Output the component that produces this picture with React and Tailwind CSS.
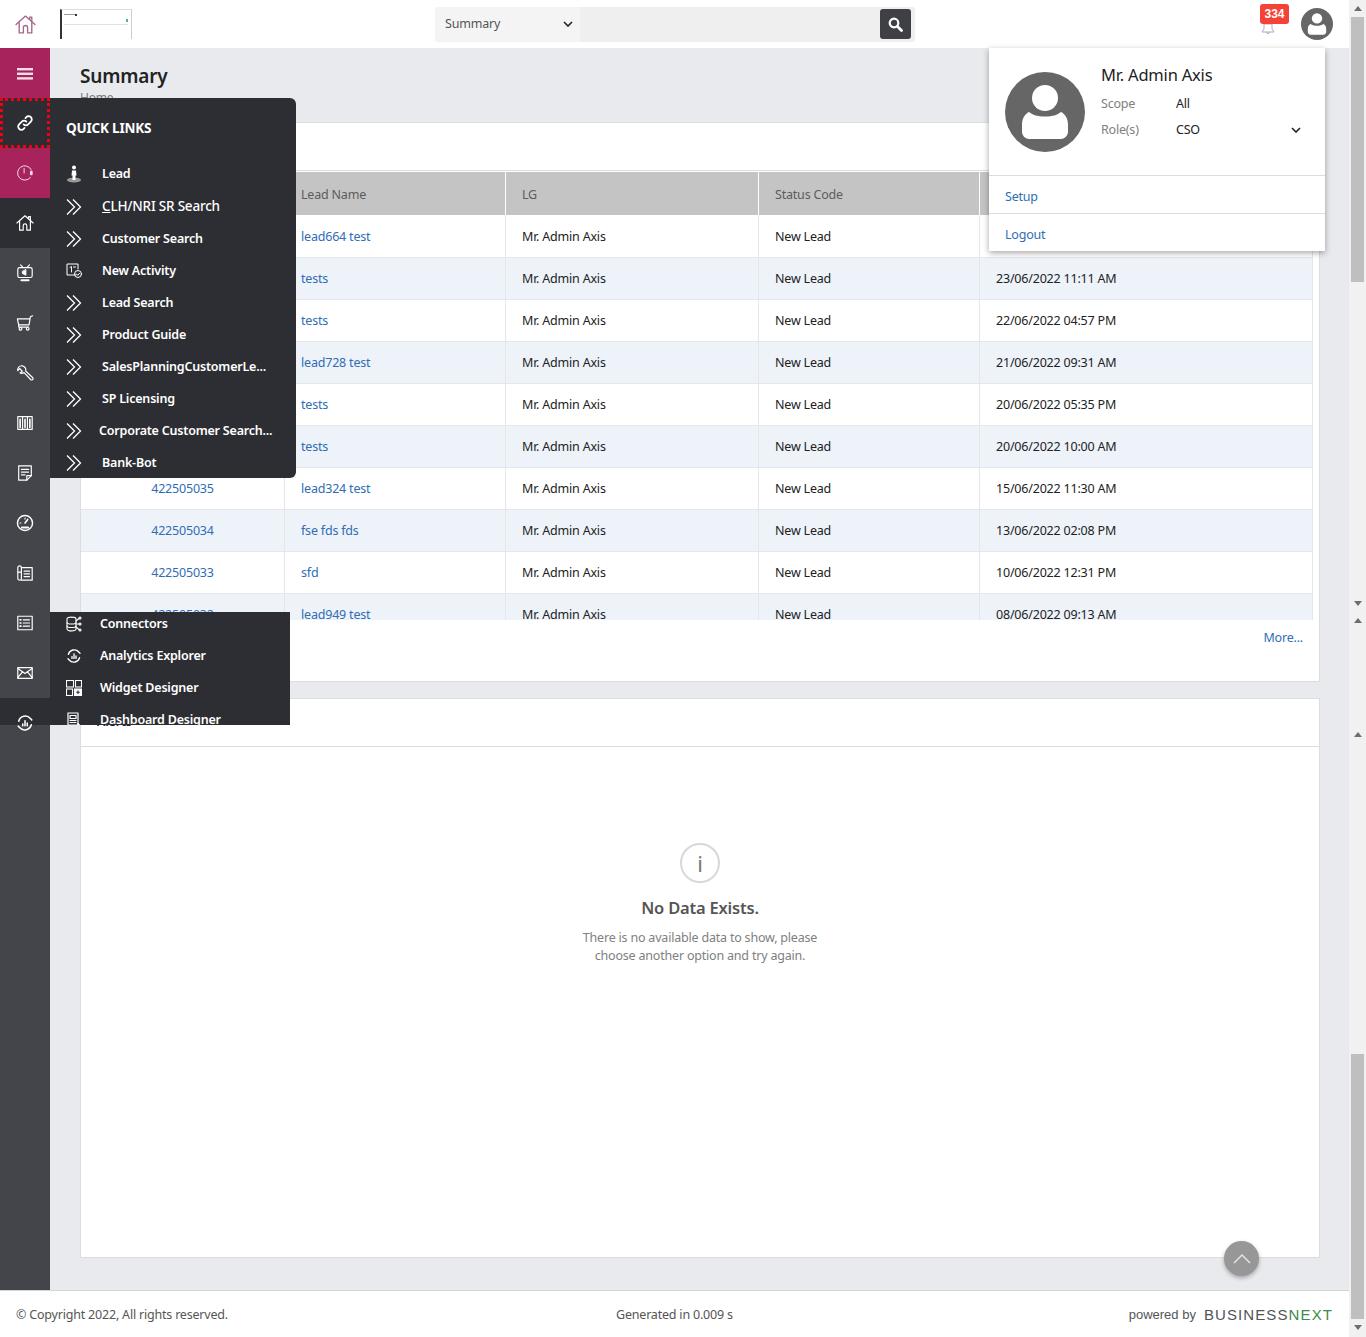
import React from 'react'

const Svg = ({ size = 18, box = 20, children, className = 'text-white' }) => (
  <svg width={size} height={size} viewBox={`0 0 ${box} ${box}`} fill="none" stroke="currentColor" strokeWidth="1.3" strokeLinecap="round" strokeLinejoin="round" className={className}>
    {children}
  </svg>
)

const HomeIcon = ({ size = 18, className }) => (
  <Svg size={size} className={className}>
    <path d="M1 10 10 2l9 8" />
    <path d="M4 8v10h4v-5a2 2 0 0 1 4 0v5h4V8" />
    <path d="M14 5V3h2v4" />
  </Svg>
)
const MenuIcon = () => (
  <svg width="16" height="12" viewBox="0 0 16 12" className="mt-[2px] text-[#f4dce8]" fill="currentColor">
    <rect y="0" width="16" height="2.4" />
    <rect y="4.6" width="16" height="2.4" />
    <rect y="9.2" width="16" height="2.4" />
  </svg>
)
const LinkIcon = () => (
  <Svg>
    <g strokeWidth="2">
      <path d="M8.5 11.5a3.4 3.4 0 0 0 5 0l3-3a3.5 3.5 0 0 0-5-5l-1 1" />
      <path d="M11.5 8.5a3.4 3.4 0 0 0-5 0l-3 3a3.5 3.5 0 0 0 5 5l1-1" />
    </g>
  </Svg>
)
const ClockIcon = () => (
  <Svg className="text-[#f6dbe7]">
    <path d="M17 6.5A8 8 0 1 0 16 15" strokeWidth="1.1" />
    <path d="M9 5v5" strokeWidth="1.1" />
    <rect x="15.5" y="7.5" width="3" height="5" rx="1" fill="currentColor" stroke="none" />
  </Svg>
)
const TvIcon = () => (
  <Svg>
    <path d="m5 1 3 3M15 1l-3 3" />
    <rect x="2" y="4" width="16" height="11" rx="2" />
    <path d="M7 8.500v2l4 2V6.500z" fill="currentColor" strokeWidth="1" />
    <path d="M6 18h8" strokeWidth="2.2" />
  </Svg>
)
const CartIcon = () => (
  <Svg>
    <path d="M18.5 2 16 3l-1.5 9H3L1.5 5.5H15" />
    <path d="M3 12v2.5h11" />
    <circle cx="5" cy="16.5" r="1.5" />
    <circle cx="13" cy="16.5" r="1.5" />
  </Svg>
)
const WrenchIcon = () => (
  <Svg>
    <path d="M7 2a4.5 4.5 0 0 0-5 5.5L4 5l3 3-2.5 2A4.5 4.5 0 0 0 9 9.5l7.5 8a1.6 1.6 0 0 0 2.2-2.2l-8-7.5A4.5 4.5 0 0 0 7 2z" />
  </Svg>
)
const ColumnsIcon = () => (
  <Svg>
    <rect x="2" y="3" width="16" height="14" />
    <path d="M7.3 3v14M12.7 3v14" />
    <path d="M4.6 6v9M10 6v9M15.4 6v9" strokeWidth="1.800" />
  </Svg>
)
const NoteIcon = () => (
  <Svg>
    <path d="M3 2h14v11l-5 5H3z" />
    <path d="M12 18v-5h5" />
    <path d="M6 6h8M6 9h8M6 12h4" />
  </Svg>
)
const GaugeIcon = () => (
  <Svg>
    <circle cx="10" cy="10" r="8.4" strokeWidth="1.6" />
    <path d="m10 10 3-4" strokeWidth="1.800" />
    <path d="M6.5 15h7" strokeWidth="2.2" />
    <path d="M4.5 10h1M10 4.5v1" />
  </Svg>
)
const ScrollIcon = () => (
  <Svg>
    <rect x="2" y="2" width="4" height="16" rx="2" />
    <path d="M6 4h12v14H6" />
    <path d="M9 8h6M9 11h6M9 14h6" />
    <path d="M2 9h4" />
  </Svg>
)
const ChecklistIcon = () => (
  <Svg>
    <rect x="2" y="2.5" width="16" height="15" />
    <path d="M8 6.5h7M8 10h7M8 13.5h7" />
    <path d="M4.5 6.5h1M4.5 10h1M4.5 13.5h1" strokeWidth="1.800" />
  </Svg>
)
const MailIcon = () => (
  <Svg>
    <rect x="2" y="4" width="16" height="12" />
    <path d="m2 5 8 5.500L18 5M2 15l5.500-6.500M18 15l-5.500-6.500" />
  </Svg>
)
const AnalyticsIcon = ({ size = 18 }) => (
  <Svg size={size}>
    <g strokeWidth="1.700">
      <path d="M3 8a7.500 7.500 0 0 1 13-3l1.500 1.500" />
      <path d="M17 12a7.500 7.500 0 0 1-13 3l-1.500-1.500" />
      <path d="M7.500 13v-2M10 13V7.500M12.500 13V10" />
    </g>
  </Svg>
)
const Chevrons = () => (
  <svg width="16" height="16" viewBox="0 0 16 16" fill="none" stroke="white" strokeWidth="1.3">
    <path d="M1 .5 8.500 8 1 15.500" />
    <path d="M7 .5 14.500 8 7 15.500" />
  </svg>
)
const LeadIcon = () => (
  <svg width="16" height="18" viewBox="0 0 16 18" fill="white">
    <ellipse cx="8" cy="15" rx="7" ry="2.600" fill="#9a9a9a" />
    <circle cx="8" cy="2.500" r="2" />
    <path d="M6 5.500h4l.5 5H9.500V15h-3v-4.500H5.500z" />
  </svg>
)
const ActivityIcon = () => (
  <Svg size={16} box={16}>
    <g strokeWidth="1">
      <path d="M10 12H1V1h11v5" />
      <path d="M4 4.500 5.500 3.500V9M7.500 4h2" />
      <circle cx="12" cy="11" r="3.500" />
      <path d="m10.500 11 1.200 1.300 1.800-2" />
    </g>
  </Svg>
)
const ConnectorIcon = () => (
  <Svg size={16} box={16}>
    <g strokeWidth="1.100">
      <path d="M1 3c0-2.500 9-2.500 9 0v10c0 2.500-9 2.500-9 0z" />
      <path d="M1 6.500c0 2 9 2 9 0M1 10c0 2 9 2 9 0" />
      <path d="M10 5l3-2.500M10 8h3M10 11l3 2.500" />
      <circle cx="14" cy="2" r="1" />
      <circle cx="14" cy="8" r="1" />
      <circle cx="14" cy="14" r="1" />
    </g>
  </Svg>
)
const WidgetIcon = () => (
  <svg width="16" height="16" viewBox="0 0 16 16" fill="none" stroke="white" strokeWidth="1.100">
    <rect x=".5" y=".5" width="7" height="6.500" />
    <rect x="9.500" y=".5" width="6" height="6.500" />
    <rect x=".5" y="9" width="6" height="6.500" />
    <rect x="8.500" y="9" width="7" height="6.500" fill="white" />
    <path d="M12 10.500v3.500M10.300 12.300h3.500" stroke="#2d2e33" />
  </svg>
)
const DashboardIcon = () => (
  <Svg size={16} box={16}>
    <g strokeWidth="1.200">
      <path d="M12 13H2V1h10z" />
      <path d="M4 3.500h6v3H4zM4 8.500h6M4 10.500h6" />
      <path d="m12 12 3 3" strokeWidth="1.800" />
    </g>
  </Svg>
)
const ChevronDown = ({ className = '' }) => (
  <svg width="10" height="6" viewBox="0 0 10 6" fill="none" stroke="#222" strokeWidth="1.600" className={className}>
    <path d="m1 1 4 4 4-4" />
  </svg>
)
const ProfileGlyph = ({ size, className }) => (
  <div className={`rounded-full bg-[#666666] flex items-center justify-center shrink-0 ${className}`}>
    <svg width={size} height={size} viewBox="0 0 80 80" fill="white">
      <circle cx="40" cy="26" r="13" />
      <path d="M24 40c4 3 8 4.500 16 4.500s12-1.500 16-4.500c4 2 7 6 7 13v7c0 3-3 7-7 7H24c-4 0-7-4-7-7v-7c0-7 3-11 7-13z" />
    </svg>
  </div>
)
const Arrow = ({ down }) => (
  <div className="h-[17px] flex items-center justify-center shrink-0">
    {down ? (
      <div className="w-0 h-0 border-x-[4px] border-x-transparent border-t-[5px] border-t-[#6e6e6e]" />
    ) : (
      <div className="w-0 h-0 border-x-[4px] border-x-transparent border-b-[5px] border-b-[#6e6e6e]" />
    )}
  </div>
)

const sideItems = [
  { icon: <MenuIcon />, cls: 'bg-[#a6235c]' },
  { icon: <LinkIcon />, cls: 'bg-[#2d2e33] border-[3px] border-dotted border-[#f00010]' },
  { icon: <ClockIcon />, cls: 'bg-[#a6235c]' },
  { icon: <HomeIcon />, cls: 'bg-[#2d2e33]' },
  { icon: <TvIcon />, cls: '' },
  { icon: <CartIcon />, cls: '' },
  { icon: <WrenchIcon />, cls: '' },
  { icon: <ColumnsIcon />, cls: '' },
  { icon: <NoteIcon />, cls: '' },
  { icon: <GaugeIcon />, cls: '' },
  { icon: <ScrollIcon />, cls: '' },
  { icon: <ChecklistIcon />, cls: '' },
  { icon: <MailIcon />, cls: '' },
]

const rows = [
  ['422505041', 'lead664 test', '24/06/2022 10:24 AM'],
  ['422505040', 'tests', '23/06/2022 11:11 AM'],
  ['422505039', 'tests', '22/06/2022 04:57 PM'],
  ['422505038', 'lead728 test', '21/06/2022 09:31 AM'],
  ['422505037', 'tests', '20/06/2022 05:35 PM'],
  ['422505036', 'tests', '20/06/2022 10:00 AM'],
  ['422505035', 'lead324 test', '15/06/2022 11:30 AM'],
  ['422505034', 'fse fds fds', '13/06/2022 02:08 PM'],
  ['422505033', 'sfd', '10/06/2022 12:31 PM'],
  ['422505032', 'lead949 test', '08/06/2022 09:13 AM'],
]

const quickLinks = [
  { label: 'Lead', icon: <LeadIcon /> },
  { label: 'CLH/NRI SR Search', icon: <Chevrons />, big: true },
  { label: 'Customer Search', icon: <Chevrons /> },
  { label: 'New Activity', icon: <ActivityIcon /> },
  { label: 'Lead Search', icon: <Chevrons /> },
  { label: 'Product Guide', icon: <Chevrons /> },
  { label: 'SalesPlanningCustomerLe...', icon: <Chevrons /> },
  { label: 'SP Licensing', icon: <Chevrons /> },
  { label: 'Corporate Customer Search...', icon: <Chevrons />, shift: true },
  { label: 'Bank-Bot', icon: <Chevrons /> },
]

const designerLinks = [
  { label: 'Connectors', icon: <ConnectorIcon /> },
  { label: 'Analytics Explorer', icon: <AnalyticsIcon size={16} /> },
  { label: 'Widget Designer', icon: <WidgetIcon /> },
  { label: 'Dashboard Designer', icon: <DashboardIcon /> },
]

const thClass = 'border-b border-r border-white px-4 pt-[4px] font-normal'
const tdClass = 'border-b border-r border-[#e4e6ea] pt-px'

export default function App() {
  return (
    <div className="relative flex h-[1337px] w-[1366px] overflow-hidden bg-white font-['Noto_Sans',sans-serif] text-[12.5px] tracking-[-0.2px] text-[#222]">
      <div className="flex w-[1349px] flex-col">
        {/* Header */}
        <header className="flex h-12 shrink-0 items-center bg-white">
          <div className="flex w-[50px] justify-center">
            <HomeIcon size={21} className="text-[#a5688a]" />
          </div>
          <div className="ml-[10px] relative h-[30px] w-[72px] border-l-2 border-l-[#333] border-r border-r-[#ccc] border-t border-t-[#ddd] bg-white">
            <div className="absolute left-[2px] top-[4px] h-px w-[12px] bg-[#999]" />
            <div className="absolute left-[13px] top-[4px] h-[2px] w-[2px] bg-[#333]" />
            <div className="absolute left-[2px] top-[14px] h-px w-[64px] bg-[#e2e2e2]" />
            <div className="absolute right-[3px] top-[9px] h-[3px] w-[2px] bg-[#5aa]" />
          </div>
          <div className="ml-[303px] flex h-[35px] w-[480px] items-center rounded-[3px] bg-[#efefef]">
            <div className="flex h-full w-[145px] items-center justify-between rounded-l-[3px] bg-[#f4f4f4] pl-[10px] pr-[7px] text-[#555]">
              <span>Summary</span>
              <ChevronDown />
            </div>
            <div className="flex-1" />
            <button className="mr-1 flex h-[30px] w-[31px] items-center justify-center rounded-[3px] bg-[#3f4045]">
              <svg width="15" height="15" viewBox="0 0 15 15" fill="none" stroke="white" strokeWidth="2.200" strokeLinecap="round">
                <circle cx="6" cy="6" r="4.300" />
                <path d="m9.500 9.500 4 4" strokeWidth="2.800" />
              </svg>
            </button>
          </div>
          <div className="relative ml-[346px] mt-[6px] h-[14px] w-[14px]">
            <svg width="14" height="14" viewBox="0 0 14 14" fill="none" stroke="#b9a6c9" strokeWidth="1">
              <path d="M3 9V4h8v5l2 3H1zM5.500 12a1.500 1.500 0 0 0 3 0" />
            </svg>
            <div className="absolute left-[-1px] top-[-16px] flex h-5 w-[29px] items-center justify-center rounded-[3px] bg-[#f44336] font-['Liberation_Sans',sans-serif] text-[12px] font-bold tracking-normal text-white">
              334
            </div>
          </div>
          <ProfileGlyph size={32} className="ml-[26px] h-8 w-8" />
        </header>

        <div className="flex min-h-0 flex-1">
          {/* Sidebar */}
          <aside className="flex w-[50px] shrink-0 flex-col bg-[#43454a]">
            {sideItems.map((item, i) => (
              <div key={i} className={`flex h-[50px] items-center justify-center ${item.cls}`}>
                {item.icon}
              </div>
            ))}
            <div className="relative flex h-[50px] items-center justify-center">
              <div className="absolute inset-x-0 top-0 h-[27px] bg-[#2d2e33]" />
              <div className="relative"><AnalyticsIcon /></div>
            </div>
          </aside>

          {/* Main */}
          <main className="min-w-0 flex-1 bg-[#e9eaee] pl-[30px] pr-[29px]">
            <div className="h-[74px] pt-4">
              <h1 className="text-[19px] font-semibold leading-6 text-[#222]">Summary</h1>
              <p className="text-[12px] leading-5 text-[#777]">Home</p>
            </div>

            <section className="flex h-[560px] flex-col border border-[#dcdde0] bg-white">
              <div className="h-[48px] shrink-0 border-b border-[#ddd]" />
              <div className="h-[449px] shrink-0 overflow-hidden pr-[6px] pt-px">
                <table className="w-full table-fixed border-separate border-spacing-0">
                  <thead>
                    <tr className="h-[44px] bg-[#c4c4c4] text-left text-[#5c5c5c]">
                      <th className={`w-[204px] ${thClass}`}>Lead ID</th>
                      <th className={`w-[221px] ${thClass}`}>Lead Name</th>
                      <th className={`w-[253px] ${thClass}`}>LG</th>
                      <th className={`w-[221px] ${thClass}`}>Status Code</th>
                      <th className={thClass}>Created On</th>
                    </tr>
                  </thead>
                  <tbody>
                    {rows.map((row, i) => (
                      <tr key={row[0]} className={`h-[42px] ${i % 2 ? 'bg-[#eef3fa]' : 'bg-white'}`}>
                        <td className={`${tdClass} text-center text-[#2f6db5]`}>{row[0]}</td>
                        <td className={`${tdClass} px-4 text-[#2f6db5]`}>{row[1]}</td>
                        <td className={`${tdClass} px-4`}>Mr. Admin Axis</td>
                        <td className={`${tdClass} px-4`}>New Lead</td>
                        <td className={`${tdClass} px-4`}>{row[2]}</td>
                      </tr>
                    ))}
                  </tbody>
                </table>
              </div>
              <div className="pr-4 pt-2 text-right leading-5 text-[#2f6db5]">More...</div>
            </section>

            <section className="mt-4 h-[560px] border border-[#dcdde0] bg-white">
              <div className="flex h-[48px] items-center border-b border-[#ddd] px-4 font-semibold">Alerts</div>
              <div className="flex flex-col items-center pt-[96px]">
                <div className="flex h-10 w-10 items-center justify-center rounded-full border-2 border-[#d8d8d8] text-[22px] leading-none text-[#777]">i</div>
                <h3 className="mt-[13px] text-[16.5px] font-semibold leading-6 text-[#555]">No Data Exists.</h3>
                <p className="mt-[9px] w-[260px] text-center leading-[18px] text-[#808080]">
                  There is no available data to show, please choose another option and try again.
                </p>
              </div>
            </section>
          </main>
        </div>

        {/* Footer */}
        <footer className="flex h-[47px] shrink-0 items-center border-t border-[#d5d5d5] bg-white pl-4 pr-4 pt-[2px] text-[#555]">
          <span className="w-[600px]">© Copyright 2022, All rights reserved.</span>
          <span>Generated in 0.009 s</span>
          <div className="ml-auto flex items-center font-['Liberation_Sans',sans-serif] tracking-normal">
            <span className="mr-2 text-[13px] text-[#555]">powered by</span>
            <span className="text-[15px] tracking-[1.1px] text-[#4f5358]">BUSINESS</span>
            <span className="text-[15px] tracking-[1.1px] text-[#3f8a4d]">NEXT</span>
          </div>
        </footer>
      </div>

      {/* Page and panel scrollbars */}
      <div className="flex w-[17px] shrink-0 flex-col bg-[#f1f1f1]">
        <Arrow />
        <div className="mx-[2px] h-[265px] bg-[#bfbfbf]" />
        <div className="h-[313px]" />
        <Arrow down />
        <Arrow />
        <div className="h-[97px]" />
        <Arrow />
        <div className="h-[311px]" />
        <div className="mx-[2px] h-[265px] bg-[#bfbfbf]" />
        <Arrow down />
      </div>

      {/* Quick links flyout */}
      <div className="absolute left-[50px] top-[98px] h-[380px] w-[246px] rounded-r-md bg-[#2d2e33] pl-4 text-white">
        <div className="flex h-[60px] items-center text-[13.5px] font-bold">QUICK LINKS</div>
        {quickLinks.map((link) => (
          <div key={link.label} className={`flex items-center font-semibold ${link.big ? 'h-[33px]' : 'h-8'}`}>
            <div className="flex w-4 justify-center">{link.icon}</div>
            <span className={`${link.shift ? 'ml-[17px]' : 'ml-5'} ${link.big ? 'text-[13.5px] font-medium' : ''} whitespace-nowrap`}>
              {link.big ? <><span className="underline">C</span>{link.label.slice(1)}</> : link.label}
            </span>
          </div>
        ))}
      </div>

      {/* Designer flyout, cut off by the panel below */}
      <div className="absolute left-[50px] top-[612px] h-[113px] w-[240px] overflow-hidden bg-[#2d2e33] pl-4 text-white">
        <div className="-mt-[4px]">
          {designerLinks.map((link) => (
            <div key={link.label} className="flex h-8 items-center font-semibold">
              <div className="flex w-4 justify-center">{link.icon}</div>
              <span className="ml-[18px] whitespace-nowrap">{link.label}</span>
            </div>
          ))}
        </div>
      </div>

      {/* Profile dropdown */}
      <div className="absolute left-[989px] top-[48px] h-[203px] w-[336px] bg-white shadow-[0_2px_6px_rgba(0,0,0,0.35)]">
        <div className="flex h-[128px] border-b border-[#ddd] pl-4 pt-6">
          <ProfileGlyph size={80} className="h-20 w-20" />
          <div className="ml-4 w-[207px] -mt-[9px]">
            <div className="text-[16.5px] leading-6 text-[#222]">Mr. Admin Axis</div>
            <div className="mt-[8px] flex items-center leading-[18px]">
              <span className="w-[75px] text-[#808080]">Scope</span>
              <span className="-mt-px">All</span>
            </div>
            <div className="mt-[8px] flex items-center leading-[18px]">
              <span className="w-[75px] text-[#808080]">Role(s)</span>
              <span>CSO</span>
              <ChevronDown className="ml-auto mr-[7px]" />
            </div>
          </div>
        </div>
        <div className="flex h-[38px] items-center border-b border-[#ddd] pl-4 pt-[6px] text-[#2f6db5]">Setup</div>
        <div className="flex h-[37px] items-center pl-4 pt-[6px] text-[#2f6db5]">Logout</div>
      </div>

      {/* Back to top button */}
      <button className="absolute left-[1224px] top-[1241px] flex h-[35px] w-[35px] items-center justify-center rounded-full bg-[#979797] shadow-[0_2px_4px_rgba(0,0,0,0.3)]">
        <svg width="18" height="10" viewBox="0 0 18 10" fill="none" stroke="#e8e8e8" strokeWidth="1.400">
          <path d="m1 9 8-8 8 8" />
        </svg>
      </button>
    </div>
  )
}
